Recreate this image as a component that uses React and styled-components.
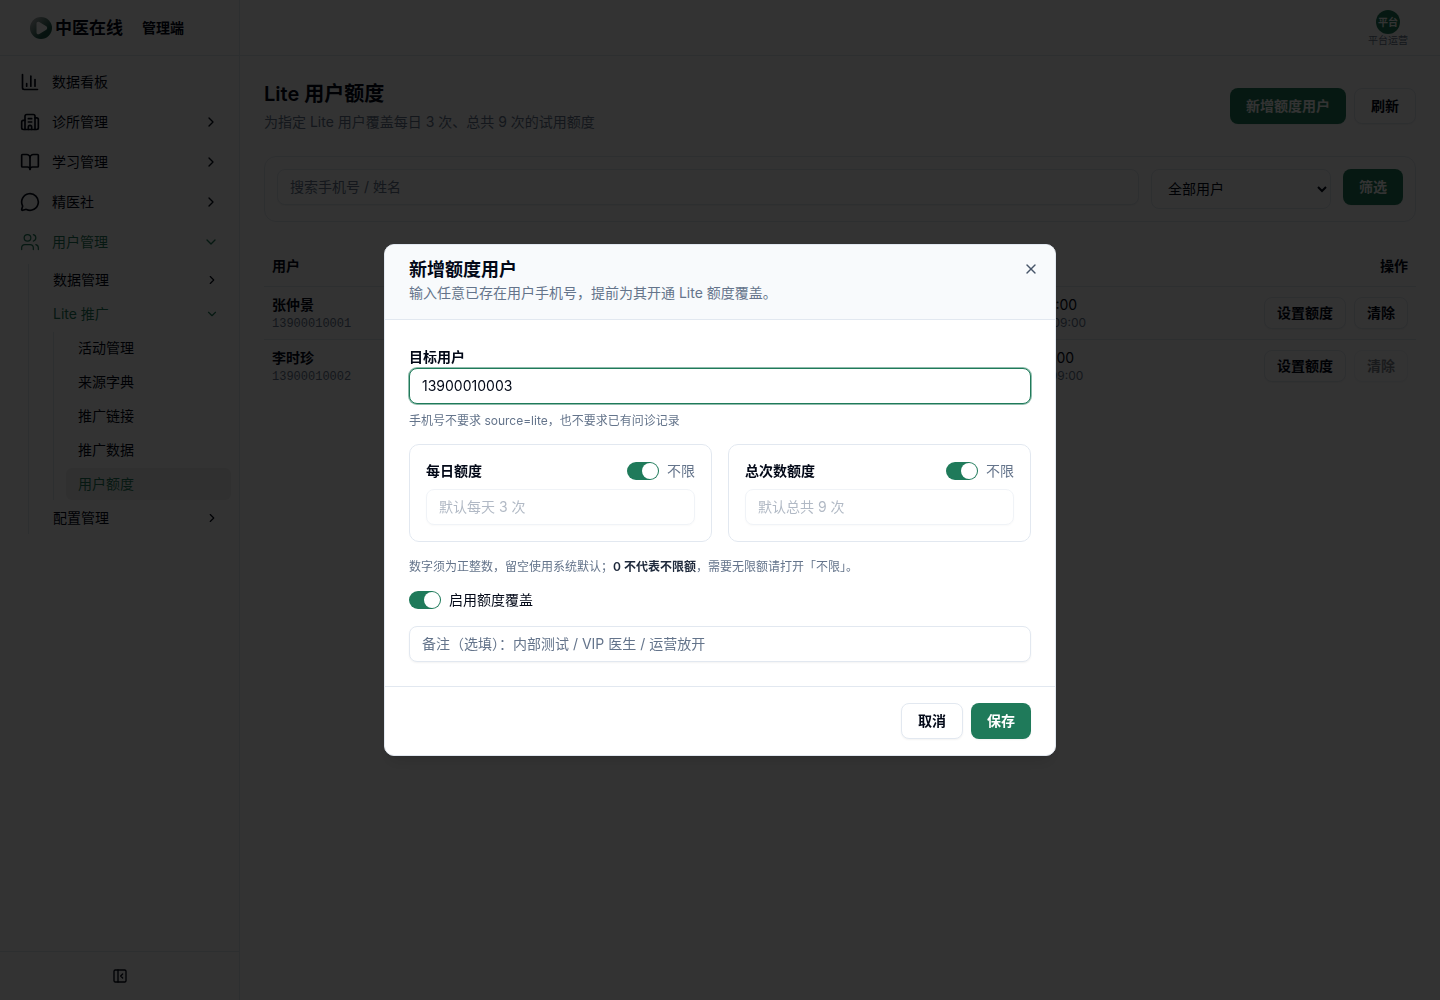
import React, {useState} from 'react'
import styled, {createGlobalStyle} from 'styled-components'
import {
    BookOpen,
    Building2,
    ChartColumn,
    ChevronDown,
    ChevronRight,
    MessageCircle,
    PanelLeftClose,
    Users,
    X,
} from 'lucide-react'

const menu = [
    {label: '数据看板', icon: ChartColumn},
    {label: '诊所管理', icon: Building2, more: true},
    {label: '学习管理', icon: BookOpen, more: true},
    {label: '精医社', icon: MessageCircle, more: true},
    {label: '用户管理', icon: Users, more: true, open: true},
]

const promotion = ['活动管理', '来源字典', '推广链接', '推广数据', '用户额度']

const users = [
    {name: '张仲景', phone: '13900010001', daily: '10', total: '不限', updated: '2026-06-02 09:00', created: '创建 2026-05-20 09:00', covered: true},
    {name: '李时珍', phone: '13900010002', daily: '3', total: '9', updated: '2026-06-02 10:00', created: '创建 2026-05-21 09:00', covered: false},
]

function Logo() {
    return (
        <svg width="22" height="22" viewBox="0 0 22 22" aria-hidden="true">
            <defs>
                <linearGradient id="logo" x1="0" y1="0" x2="1" y2="1">
                    <stop offset="0.2" stopColor="#9aa5a3" />
                    <stop offset="0.7" stopColor="#1f5c4c" />
                </linearGradient>
            </defs>
            <circle cx="11" cy="11" r="11" fill="url(#logo)" />
            <path d="M6.500 6.500c0-1.600 1.500-2.300 2.800-1.500l7 4.300c1.200.8 1.200 2.600 0 3.400l-7 4.300c-1.300.8-2.800.1-2.800-1.500z" fill="#fff" />
        </svg>
    )
}

function Toggle({id, checked, onChange}) {
    return <Switch type="checkbox" role="switch" id={id} checked={checked} onChange={(e) => onChange(e.target.checked)} />
}

function Sidebar() {
    return (
        <Aside>
            <Brand>
                <Logo />
                <BrandName>中医在线</BrandName>
                <BrandRole>管理端</BrandRole>
            </Brand>
            <Nav>
                {menu.map(({label, icon: Icon, more, open}) => (
                    <NavLink href="#" key={label} $active={open}>
                        <Icon size={20} strokeWidth={open ? 1.5 : 2} />
                        <span>{label}</span>
                        {more && (open ? <ChevronDown size={16} /> : <ChevronRight size={16} />)}
                    </NavLink>
                ))}
                <SubMenu $indent={20}>
                    <SubLink href="#"><span>数据管理</span><ChevronRight size={14} /></SubLink>
                    <SubLink href="#" $active><span>Lite 推广</span><ChevronDown size={14} /></SubLink>
                    <SubMenu $indent={12}>
                        {promotion.map((label) => (
                            <SubLink href="#" key={label} $active={label === '用户额度'} $current={label === '用户额度'}>
                                <span>{label}</span>
                            </SubLink>
                        ))}
                    </SubMenu>
                    <SubLink href="#"><span>配置管理</span><ChevronRight size={14} /></SubLink>
                </SubMenu>
            </Nav>
            <AsideFooter>
                <IconButton aria-label="收起菜单"><PanelLeftClose size={16} /></IconButton>
            </AsideFooter>
        </Aside>
    )
}

function QuotaDialog() {
    const [phone, setPhone] = useState('13900010003')
    const [daily, setDaily] = useState(true)
    const [total, setTotal] = useState(true)
    const [enabled, setEnabled] = useState(true)

    return (
        <Overlay>
            <Dialog role="dialog" aria-modal="true" aria-labelledby="dialog-title">
                <DialogHeader>
                    <div>
                        <DialogTitle id="dialog-title">新增额度用户</DialogTitle>
                        <DialogText>输入任意已存在用户手机号，提前为其开通 Lite 额度覆盖。</DialogText>
                    </div>
                    <IconButton aria-label="关闭"><X size={16} /></IconButton>
                </DialogHeader>
                <DialogBody>
                    <div>
                        <FieldLabel htmlFor="phone">目标用户</FieldLabel>
                        <Input id="phone" $ring value={phone} onChange={(e) => setPhone(e.target.value)} />
                        <FieldHint>手机号不要求 source=lite，也不要求已有问诊记录</FieldHint>
                    </div>
                    <QuotaGrid>
                        <QuotaCard>
                            <QuotaHead>
                                <QuotaLabel htmlFor="daily">每日额度</QuotaLabel>
                                <Toggle id="daily-free" checked={daily} onChange={setDaily} />
                                <SwitchLabel htmlFor="daily-free" $muted>不限</SwitchLabel>
                            </QuotaHead>
                            <Input id="daily" placeholder="默认每天 3 次" disabled={daily} />
                        </QuotaCard>
                        <QuotaCard>
                            <QuotaHead>
                                <QuotaLabel htmlFor="total">总次数额度</QuotaLabel>
                                <Toggle id="total-free" checked={total} onChange={setTotal} />
                                <SwitchLabel htmlFor="total-free" $muted>不限</SwitchLabel>
                            </QuotaHead>
                            <Input id="total" placeholder="默认总共 9 次" disabled={total} />
                        </QuotaCard>
                    </QuotaGrid>
                    <Hint>数字须为正整数，留空使用系统默认；<strong>0 不代表不限额</strong>，需要无限额请打开「不限」。</Hint>
                    <SwitchRow>
                        <Toggle id="enabled" checked={enabled} onChange={setEnabled} />
                        <SwitchLabel htmlFor="enabled">启用额度覆盖</SwitchLabel>
                    </SwitchRow>
                    <Input aria-label="备注" placeholder="备注（选填）：内部测试 / VIP 医生 / 运营放开" />
                </DialogBody>
                <DialogFooter>
                    <Button>取消</Button>
                    <Button $primary>保存</Button>
                </DialogFooter>
            </Dialog>
        </Overlay>
    )
}

function App() {
    return (
        <>
            <GlobalStyle />
            <Layout>
                <Sidebar />
                <Page>
                    <TopBar>
                        <Account>
                            <Avatar>平台</Avatar>
                            <span>平台运营</span>
                        </Account>
                    </TopBar>
                    <Content>
                        <Heading>
                            <div>
                                <Title>Lite 用户额度</Title>
                                <Subtitle>为指定 Lite 用户覆盖每日 3 次、总共 9 次的试用额度</Subtitle>
                            </div>
                            <Actions>
                                <Button $primary>新增额度用户</Button>
                                <Button>刷新</Button>
                            </Actions>
                        </Heading>
                        <Filters>
                            <Input aria-label="搜索" placeholder="搜索手机号 / 姓名" />
                            <Select aria-label="用户范围">
                                <option>全部用户</option>
                            </Select>
                            <Button $primary>筛选</Button>
                        </Filters>
                        <Table>
                            <thead>
                                <tr>
                                    <Th $width="22%">用户</Th>
                                    <Th $width="18%">每日额度</Th>
                                    <Th $width="19%">总次数额度</Th>
                                    <Th>更新时间</Th>
                                    <Th>操作</Th>
                                </tr>
                            </thead>
                            <tbody>
                                {users.map((user) => (
                                    <tr key={user.phone}>
                                        <td>
                                            <Name>{user.name}</Name>
                                            <Phone>{user.phone}</Phone>
                                        </td>
                                        <td>{user.daily}</td>
                                        <td>{user.total}</td>
                                        <td>
                                            {user.updated}
                                            <Small>{user.created}</Small>
                                        </td>
                                        <td>
                                            <Actions>
                                                <Button $small>设置额度</Button>
                                                <Button $small disabled={!user.covered}>清除</Button>
                                            </Actions>
                                        </td>
                                    </tr>
                                ))}
                            </tbody>
                        </Table>
                    </Content>
                </Page>
            </Layout>
            <QuotaDialog />
        </>
    )
}

export default App

const GlobalStyle = createGlobalStyle`
    * {
        box-sizing: border-box;
    }

    body {
        margin: 0;
        background: #fff;
        color: #020817;
        font-family: Inter, "Noto Sans CJK SC", sans-serif;
        font-size: 14px;
        line-height: 20px;
    }

    h1, h2, p {
        margin: 0;
    }

    a {
        color: inherit;
        text-decoration: none;
    }

    button, input, select {
        font: inherit;
        color: inherit;
    }
`

const Layout = styled.div`
    display: flex;
    min-height: 100vh;
`

const Aside = styled.aside`
    display: flex;
    flex-direction: column;
    flex: none;
    width: 240px;
    border-right: 1px solid #e2e8f0;
`

const Brand = styled.div`
    display: flex;
    align-items: center;
    height: 56px;
    padding: 0 30px;
    border-bottom: 1px solid #e2e8f0;
`

const BrandName = styled.span`
    margin-left: 3px;
    font-size: 17px;
    font-weight: 600;
`

const BrandRole = styled.span`
    margin-left: 19px;
    font-weight: 600;
`

const Nav = styled.nav`
    display: flex;
    flex-direction: column;
    flex: 1;
    gap: 4px;
    padding: 8px;
`

const NavLink = styled.a`
    display: flex;
    align-items: center;
    gap: 12px;
    height: 36px;
    padding: 0 12px;
    color: ${(props) => (props.$active ? '#1f7a5a' : 'inherit')};

    span {
        flex: 1;
    }
`

const SubMenu = styled.div`
    display: flex;
    flex-direction: column;
    gap: 2px;
    margin-left: ${(props) => props.$indent}px;
    padding-left: 12px;
    border-left: 1px solid #e2e8f0;
`

const SubLink = styled.a`
    display: flex;
    align-items: center;
    height: 32px;
    padding: 0 12px;
    border-radius: 6px;
    background: ${(props) => (props.$current ? '#f0f0f0' : 'none')};
    color: ${(props) => (props.$active ? '#1f7a5a' : 'inherit')};

    span {
        flex: 1;
    }
`

const AsideFooter = styled.div`
    display: flex;
    align-items: center;
    justify-content: center;
    height: 49px;
    border-top: 1px solid #e2e8f0;
`

const IconButton = styled.button`
    display: flex;
    padding: 0;
    border: 0;
    background: none;
`

const Page = styled.div`
    flex: 1;
    min-width: 0;
`

const TopBar = styled.header`
    display: flex;
    align-items: center;
    justify-content: flex-end;
    height: 56px;
    padding: 1px 32px 0;
    border-bottom: 1px solid #e2e8f0;
`

const Account = styled.div`
    display: flex;
    flex-direction: column;
    align-items: center;
    color: #64748b;
    font-size: 10px;
    line-height: 12px;
`

const Avatar = styled.span`
    display: flex;
    align-items: center;
    justify-content: center;
    width: 24px;
    height: 24px;
    border-radius: 50%;
    background: #1f7a5a;
    color: #fff;
    font-weight: 600;
`

const Content = styled.main`
    display: flex;
    flex-direction: column;
    gap: 24px;
    padding: 24px;
`

const Heading = styled.div`
    display: flex;
    align-items: center;
    justify-content: space-between;
`

const Title = styled.h1`
    font-size: 20px;
    font-weight: 600;
    line-height: 28px;
`

const Subtitle = styled.p`
    margin-top: 4px;
    color: #64748b;
`

const Actions = styled.div`
    display: flex;
    justify-content: flex-end;
    gap: 8px;
`

const Button = styled.button`
    flex: none;
    height: ${(props) => (props.$small ? 32 : 36)}px;
    padding: 0 ${(props) => (props.$small ? 12 : 16)}px;
    border: ${(props) => (props.$primary ? '0' : '1px solid #e2e8f0')};
    border-radius: 8px;
    background: ${(props) => (props.$primary ? '#1f7a5a' : '#fff')};
    box-shadow: 0 1px 2px rgba(0, 0, 0, 0.05);
    color: ${(props) => (props.$primary ? '#fff' : '#020817')};
    font-weight: 600;
    white-space: nowrap;

    &:disabled {
        opacity: 0.5;
    }
`

const Filters = styled.div`
    display: flex;
    align-items: flex-start;
    gap: 12px;
    padding: 12px;
    border: 1px solid #e2e8f0;
    border-radius: 12px;
`

const Input = styled.input`
    width: 100%;
    height: 36px;
    padding: 0 12px 2px;
    border: 1px solid ${(props) => (props.$ring ? '#1f7a5a' : '#e2e8f0')};
    border-radius: 8px;
    outline: none;
    background: #fff;
    box-shadow: ${(props) => (props.$ring ? '0 0 0 1px rgba(31, 122, 90, 0.5)' : '0 1px 2px rgba(0, 0, 0, 0.05)')};

    &::placeholder {
        color: #64748b;
        opacity: 1;
    }

    &:disabled {
        opacity: 0.5;
    }
`

const Select = styled.select`
    flex: none;
    width: 180px;
    height: 40px;
    padding: 0 12px 2px;
    border: 1px solid #e2e8f0;
    border-radius: 8px;
    background: #fff;
`

const Table = styled.table`
    width: 100%;
    border-collapse: separate;
    border-spacing: 0;
    table-layout: fixed;

    td {
        padding: 8px;
        border-bottom: 1px solid #e2e8f0;
    }

    tr:last-child td {
        border-bottom: 0;
    }
`

const Th = styled.th`
    width: ${(props) => props.$width || 'auto'};
    height: 41px;
    padding: 0 8px;
    border-bottom: 1px solid #e2e8f0;
    font-weight: 600;
    text-align: left;

    &:last-child {
        text-align: right;
    }
`

const Name = styled.div`
    font-weight: 600;
`

const Phone = styled.div`
    padding-top: 2px;
    color: #64748b;
    font-family: "Liberation Mono", monospace;
    font-size: 12px;
    line-height: 14px;
`

const Small = styled.div`
    color: #64748b;
    font-size: 12px;
    line-height: 16px;
`

const Overlay = styled.div`
    position: fixed;
    inset: 0;
    display: flex;
    align-items: center;
    justify-content: center;
    background: rgba(0, 0, 0, 0.8);
`

const Dialog = styled.div`
    width: 100%;
    max-width: 672px;
    overflow: hidden;
    border: 1px solid #e2e8f0;
    border-radius: 10px;
    background: #fff;
    box-shadow: 0 10px 15px -3px rgba(0, 0, 0, 0.1), 0 4px 6px -4px rgba(0, 0, 0, 0.1);
`

const DialogHeader = styled.div`
    display: flex;
    align-items: flex-start;
    justify-content: space-between;
    padding: 16px 16px 16px 24px;
    border-bottom: 1px solid #e2e8f0;
    background: #f8fafc;
    color: #475569;
`

const DialogTitle = styled.h2`
    color: #020817;
    font-size: 18px;
    font-weight: 600;
    line-height: 18px;
`

const DialogText = styled.p`
    margin-top: 4px;
    color: #64748b;
`

const DialogBody = styled.div`
    display: flex;
    flex-direction: column;
    gap: 16px;
    padding: 24px;
`

const FieldLabel = styled.label`
    display: block;
    padding-top: 2px;
    font-weight: 600;
    line-height: 22px;
`

const Hint = styled.p`
    padding-top: 2px;
    color: #64748b;
    font-size: 12px;
    line-height: 14px;

    strong {
        color: #1e293b;
        font-weight: 600;
    }
`

const FieldHint = styled(Hint)`
    margin-top: 8px;
`

const QuotaGrid = styled.div`
    display: grid;
    grid-template-columns: 1fr 1fr;
    gap: 16px;
`

const QuotaCard = styled.div`
    display: flex;
    flex-direction: column;
    gap: 8px;
    padding: 16px;
    border: 1px solid #e2e8f0;
    border-radius: 10px;
`

const QuotaHead = styled.div`
    display: flex;
    align-items: center;
    gap: 8px;
`

const QuotaLabel = styled.label`
    flex: 1;
    font-weight: 600;
`

const SwitchRow = styled.div`
    display: flex;
    align-items: center;
    gap: 8px;
`

const SwitchLabel = styled.label`
    color: ${(props) => (props.$muted ? '#64748b' : 'inherit')};
`

const Switch = styled.input`
    appearance: none;
    display: flex;
    align-items: center;
    flex: none;
    width: 32px;
    height: 18px;
    margin: 0;
    padding: 1px;
    border-radius: 9px;
    background: #cbd5e1;

    &::before {
        content: '';
        width: 16px;
        height: 16px;
        border-radius: 50%;
        background: #fff;
    }

    &:checked {
        justify-content: flex-end;
        background: #1f7a5a;
    }
`

const DialogFooter = styled.div`
    display: flex;
    justify-content: flex-end;
    gap: 8px;
    padding: 16px 24px;
    border-top: 1px solid #e2e8f0;
`
